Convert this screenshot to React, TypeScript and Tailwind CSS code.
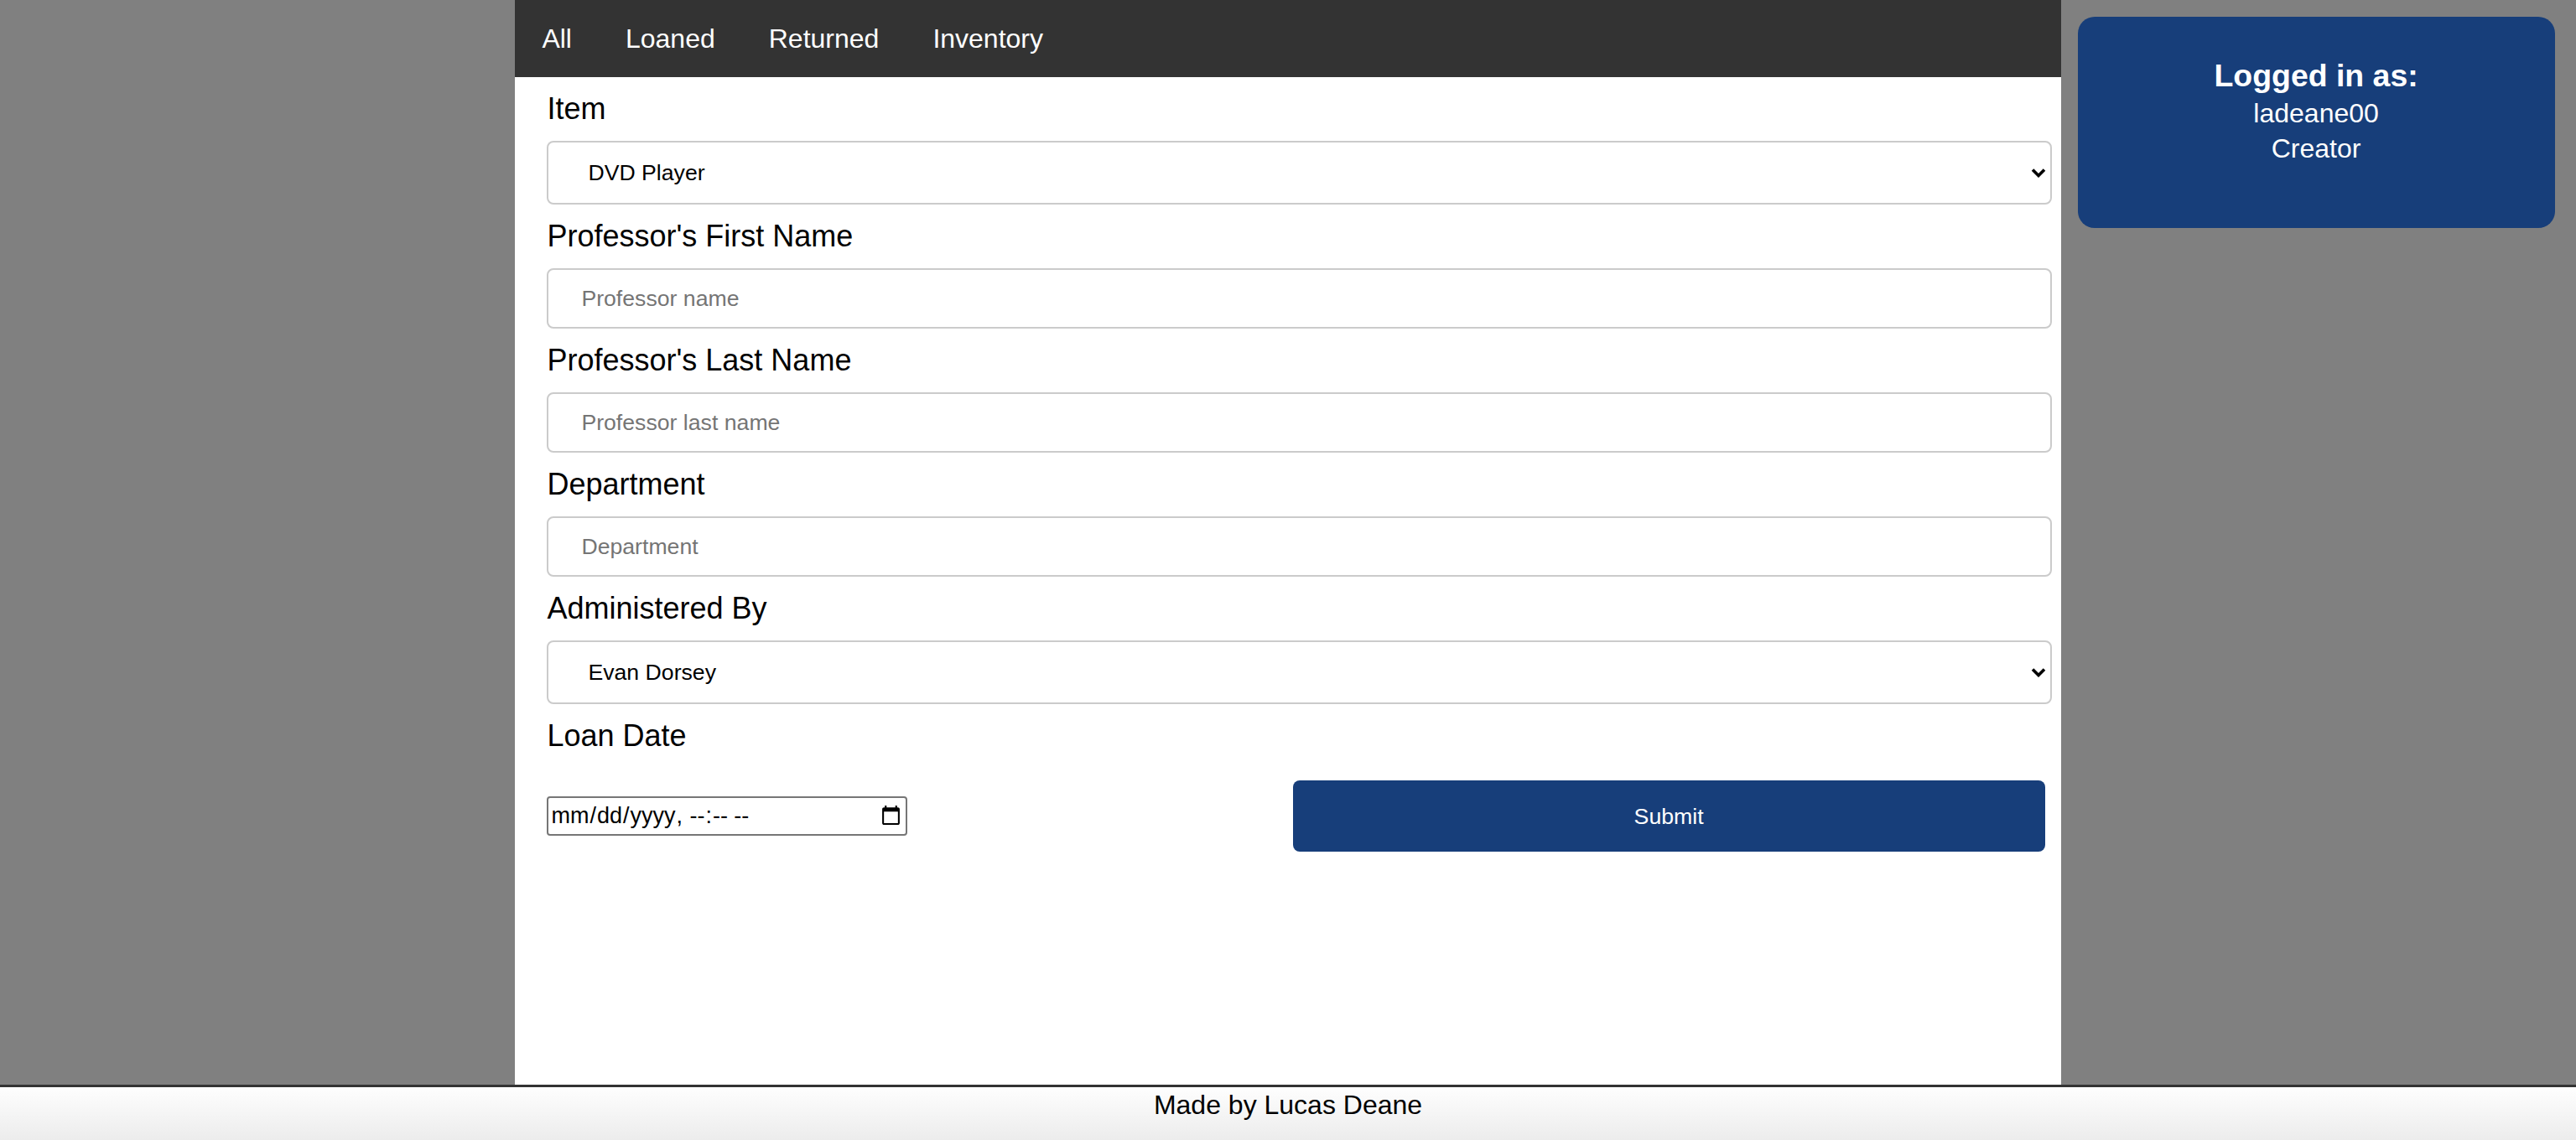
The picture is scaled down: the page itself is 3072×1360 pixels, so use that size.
import React from 'react';

const navLinks = ['All', 'Loaned', 'Returned', 'Inventory'];

function Chevron() {
  return (
    <svg
      className="pointer-events-none absolute right-[7px] top-1/2 h-[12px] w-[18px] -translate-y-1/2"
      viewBox="0 0 18 12"
      fill="none"
    >
      <path d="M2 2.5 L9 9.5 L16 2.5" stroke="#000" strokeWidth="3.6" />
    </svg>
  );
}

function Label({ children }: { children: React.ReactNode }) {
  return <label className="mt-[18px] mb-[18px] block text-[36px] leading-[40px] text-black">{children}</label>;
}

function SelectField({ value, options }: { value: string; options: string[] }) {
  return (
    <div className="relative">
      <select
        defaultValue={value}
        className="block h-[76px] w-full appearance-none rounded-[8px] border-2 border-[#cbcbcb] bg-white pl-[47px] text-[26.67px] text-black outline-none"
      >
        {options.map((o) => (
          <option key={o}>{o}</option>
        ))}
      </select>
      <Chevron />
    </div>
  );
}

function TextField({ placeholder }: { placeholder: string }) {
  return (
    <input
      type="text"
      placeholder={placeholder}
      className="block h-[72px] w-full rounded-[8px] border-2 border-[#cbcbcb] bg-white pl-[39px] text-[26.67px] text-black outline-none placeholder:text-[#757575]"
    />
  );
}

export default function App() {
  return (
    <div className="font-['Liberation_Sans',Arial,sans-serif]">
      <div className="grid h-[1294px] grid-cols-5">
        <div className="bg-[#808080]" />

        <div className="col-span-3 flex flex-col bg-white">
          <nav className="flex h-[92px] bg-[#333333]">
            {navLinks.map((l) => (
              <a key={l} href="#" className="px-[32px] text-[32px] leading-[92px] text-white">
                {l}
              </a>
            ))}
          </nav>

          <form className="flex flex-col pl-[38px] pr-[11px]" onSubmit={(e) => e.preventDefault()}>
            <Label>Item</Label>
            <SelectField value="DVD Player" options={['DVD Player', 'Projector', 'Laptop', 'HDMI Cable']} />

            <Label>Professor's First Name</Label>
            <TextField placeholder="Professor name" />

            <Label>Professor's Last Name</Label>
            <TextField placeholder="Professor last name" />

            <Label>Department</Label>
            <TextField placeholder="Department" />

            <Label>Administered By</Label>
            <SelectField value="Evan Dorsey" options={['Evan Dorsey', 'Lucas Deane']} />

            <Label>Loan Date</Label>
            <div className="mt-[15px] flex items-center justify-between">
              <input
                type="datetime-local"
                className="h-[47px] w-[430px] rounded-[4px] border-2 border-[#767676] bg-white px-[2px] text-[27px] text-black"
              />
              <button
                type="submit"
                className="mr-[8px] h-[85px] w-[897px] rounded-[8px] bg-[#173e7a] text-[26.67px] text-white"
              >
                Submit
              </button>
            </div>
          </form>
        </div>

        <div className="bg-[#808080]">
          <div className="ml-[20px] mt-[20px] h-[252px] w-[569px] rounded-[20px] bg-[#173e7a] pt-[48px] text-center text-white">
            <h3 className="text-[37.44px] font-bold leading-[44px]">Logged in as:</h3>
            <p className="mt-[2px] text-[32px] leading-[42px]">ladeane00</p>
            <p className="text-[32px] leading-[42px]">Creator</p>
          </div>
        </div>
      </div>

      <footer className="h-[66px] border-t-[3px] border-[#333333] bg-gradient-to-b from-[#fefefe] to-[#ececec] pt-[3px] text-center text-[32px] leading-[37px] text-black">
        Made by Lucas Deane
      </footer>
    </div>
  );
}
